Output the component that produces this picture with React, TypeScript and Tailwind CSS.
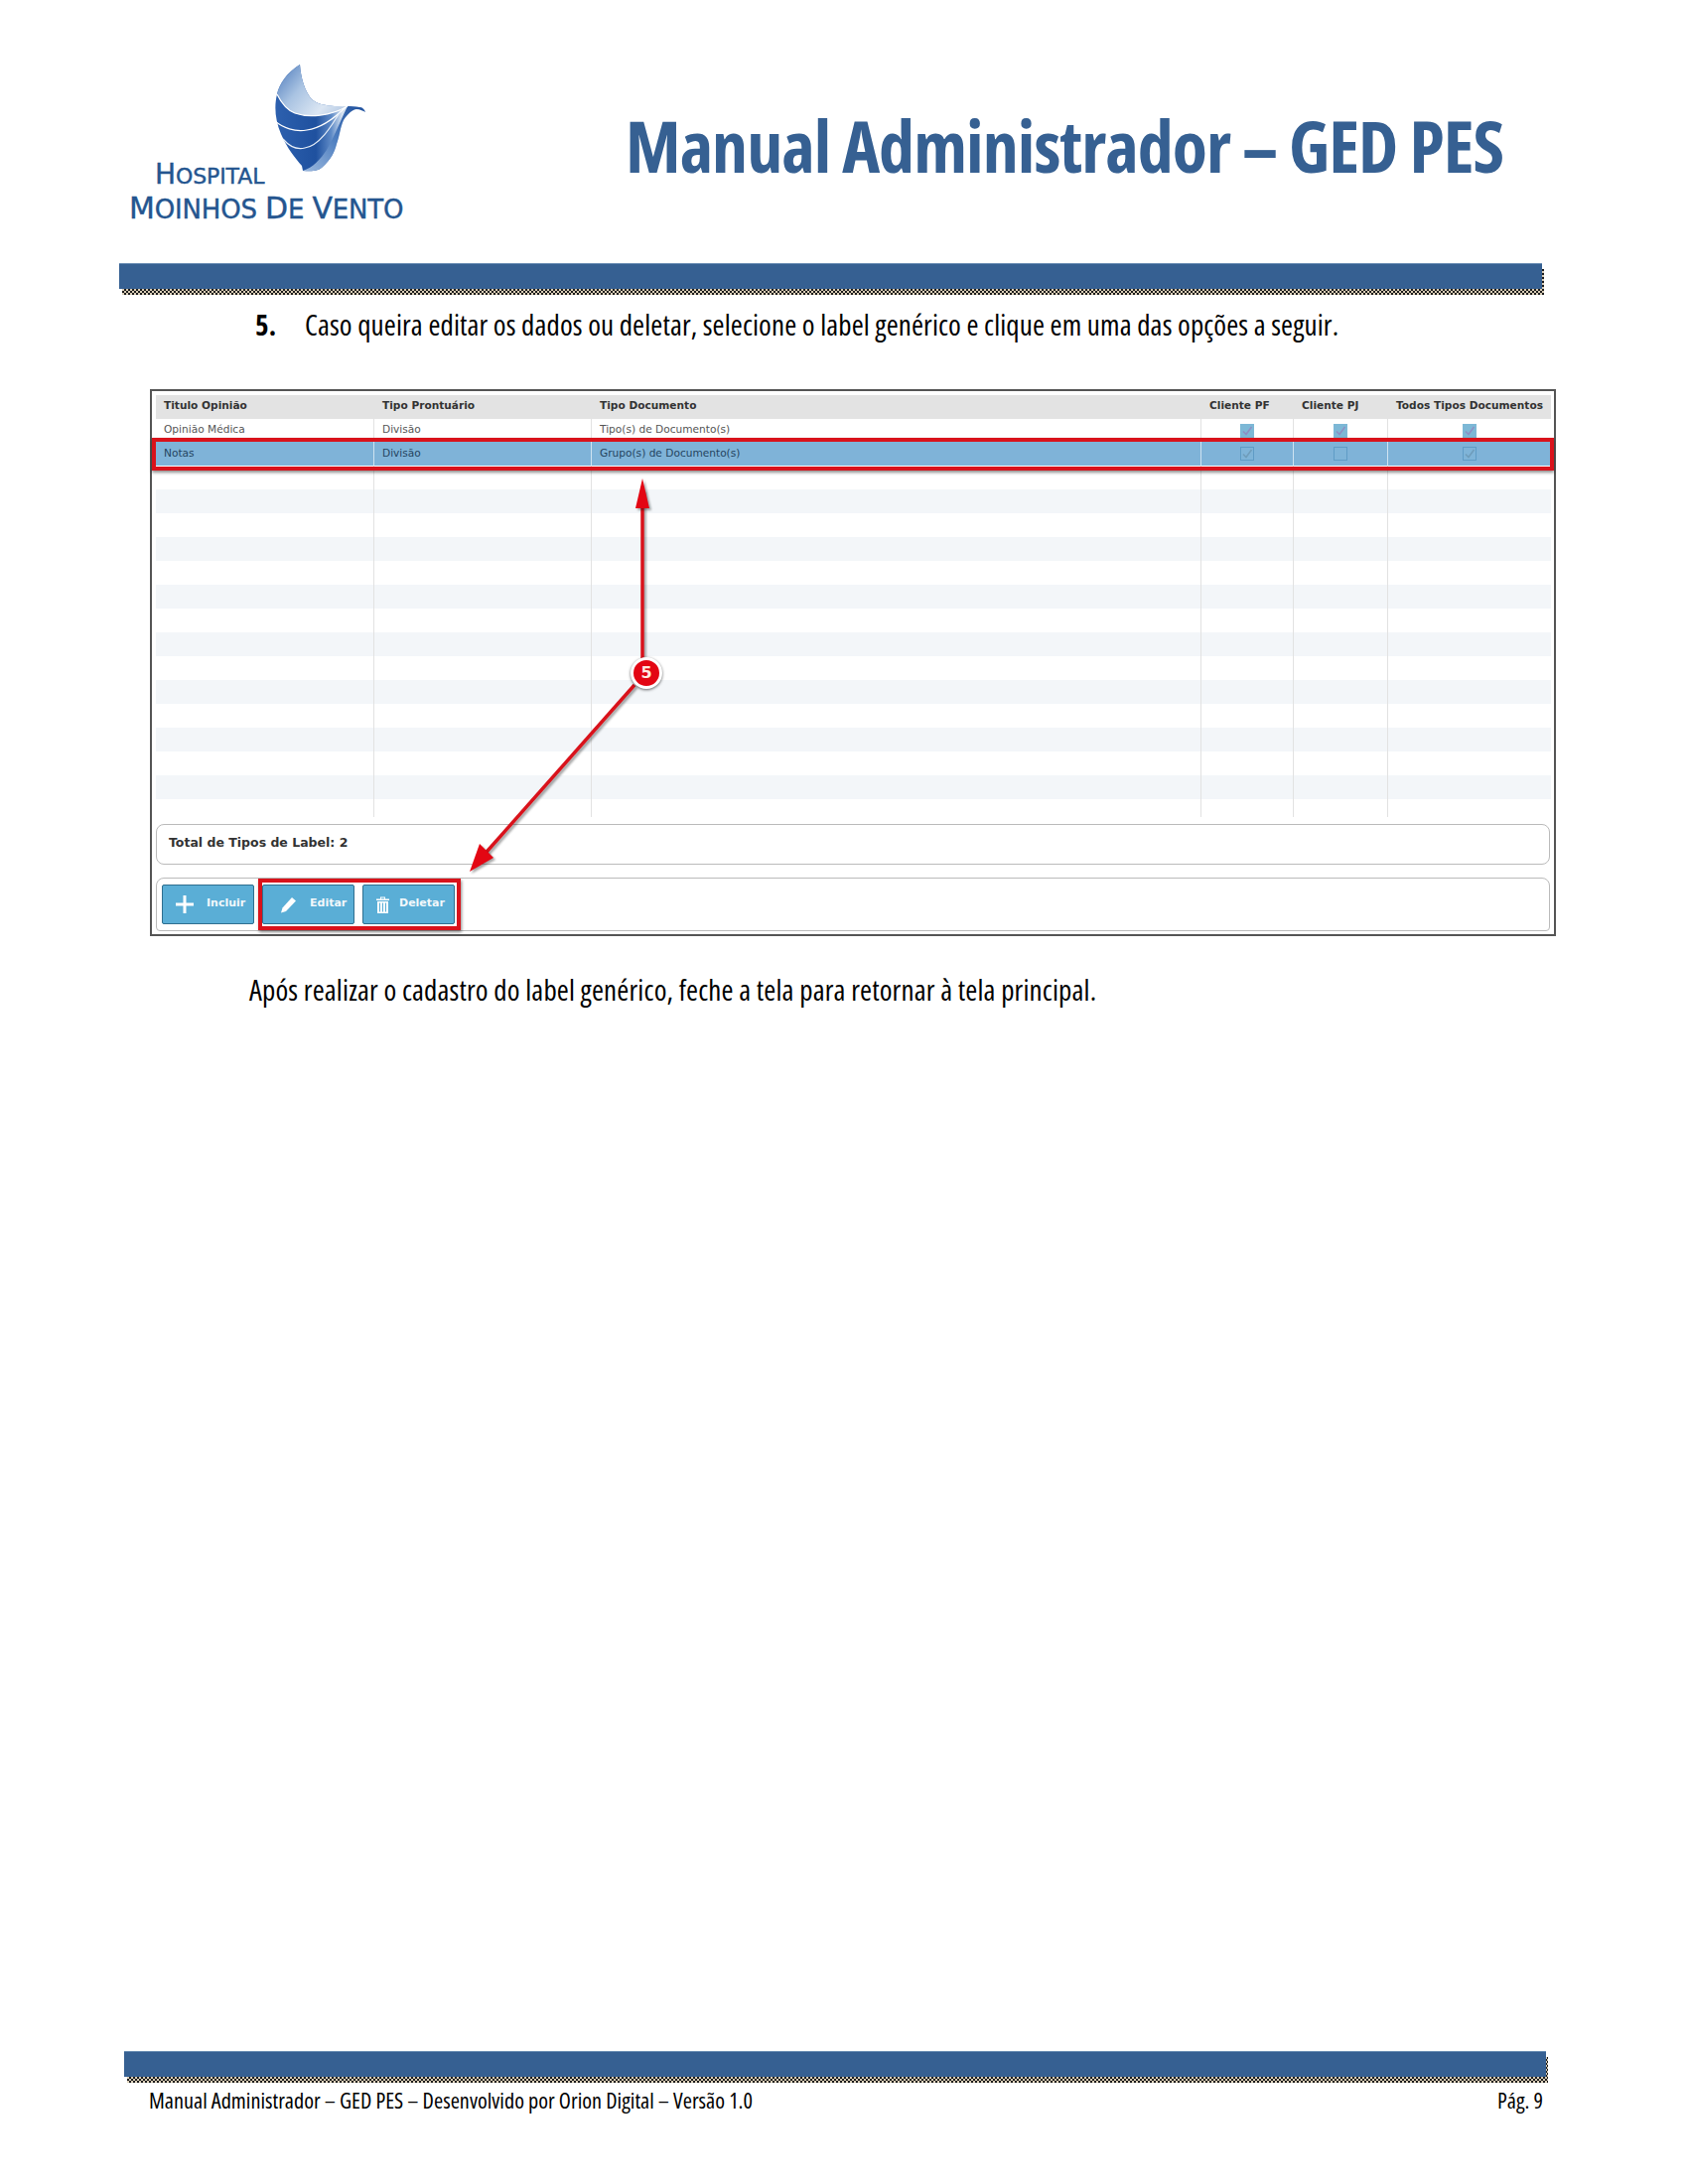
const condensed = { fontFamily: '"Open Sans", sans-serif', fontStretch: '75%' };

const columns = ['Titulo Opinião', 'Tipo Prontuário', 'Tipo Documento', 'Cliente PF', 'Cliente PJ', 'Todos Tipos Documentos'];
const rowGrid = 'grid grid-cols-[220px_219px_614px_93px_95px_163px]';
const stripes = [0, 1, 2, 3, 4, 5, 6, 7, 8, 9, 10, 11, 12, 13, 14];

const Bar = () => (
  <div className="relative h-[33px]">
    <div className="absolute left-[3px] top-[6px] h-[26px] w-[calc(100%-1px)] bg-[repeating-conic-gradient(#1d1d1d_0_25%,#d9cdb6_0_50%)] bg-[length:4px_4px]" />
    <div className="relative h-[26px] border-t border-[#6c8fb5] bg-[#366092]" />
  </div>
);

const Swoosh = () => (
  <svg width="92" height="108" viewBox="0 0 92 108" className="block">
    <defs>
      <linearGradient id="top" x1="0" y1="0.2" x2="1" y2="0.8">
        <stop offset="0" stopColor="#5c86c2" />
        <stop offset="0.35" stopColor="#a9c3e2" />
        <stop offset="0.75" stopColor="#dbe6f3" />
        <stop offset="1" stopColor="#b7cbe4" />
      </linearGradient>
      <linearGradient id="body" x1="0" y1="0" x2="1" y2="0">
        <stop offset="0" stopColor="#2d60ae" />
        <stop offset="0.45" stopColor="#1f519f" />
        <stop offset="0.62" stopColor="#5e8ac6" />
        <stop offset="0.74" stopColor="#d5e2f1" />
      </linearGradient>
      <linearGradient id="wing" x1="0" y1="1" x2="1" y2="0">
        <stop offset="0" stopColor="#9cb9de" />
        <stop offset="0.5" stopColor="#4f7fc0" />
        <stop offset="1" stopColor="#1f4f9c" />
      </linearGradient>
    </defs>
    <path d="M25 0C12 8 4 20 2 30C-1 42 0 56 6 70C12 84 20 94 27 102L28 107C38 108 44 107 48 103C56 96 60 88 62 80C65 72 66 62 69 56C73 50 78 45 82 45C86 45 89 47 91 48C90 45 88 43 85 43C76 41 68 43 60 42C50 41 42 40 36 34C30 26 26 14 25 0Z" fill="url(#body)" />
    <path d="M25 0C12 8 4 20 2 30C6 38 12 46 20 49C34 54 56 52 73 42C68 43 64 42 60 42C50 41 42 40 36 34C30 26 26 14 25 0Z" fill="url(#top)" />
    <path d="M73 42C66 56 60 72 52 86C46 95 38 104 28 107C38 108 44 107 48 103C56 96 60 88 62 80C65 72 66 62 69 56C73 50 78 45 82 45C86 45 89 47 91 48C90 45 88 43 85 43C80 42 77 42 73 42Z" fill="url(#wing)" />
    <path d="M2 30C6 38 12 46 20 49C34 54 56 52 73 42" fill="none" stroke="#ffffff" strokeWidth="1.2" />
    <path d="M0 57C8 64 20 68 32 66C46 64 60 54 71 43" fill="none" stroke="#ffffff" strokeWidth="1.2" />
    <path d="M8 75C14 82 22 86 30 84C44 82 56 64 67 45" fill="none" stroke="#e6eef8" strokeWidth="1.2" />
  </svg>
);

const Logo = () => (
  <div className="w-[300px] text-[#24558f] [-webkit-text-stroke:0.4px_#24558f]" style={{ fontFamily: '"DejaVu Sans", sans-serif' }}>
    <div className="ml-[147px]">
      <Swoosh />
    </div>
    <div className="-mt-[13px] ml-[26px] text-[22px] leading-[32px] tracking-[-0.1px] whitespace-nowrap uppercase">
      <span className="text-[28px]">H</span>ospital
    </div>
    <div className="text-[26px] leading-[32px] tracking-[-0.15px] whitespace-nowrap uppercase">
      <span className="text-[30px]">M</span>oinhos <span className="text-[30px]">d</span>e <span className="text-[30px]">V</span>ento
    </div>
  </div>
);

const CheckBox = ({ selected, checked }: { selected?: boolean; checked: boolean }) => (
  <div
    className={
      selected
        ? 'flex h-[14px] w-[14px] items-center justify-center border border-[#5f9cc6] bg-[#7fb4d8]'
        : 'flex h-[14px] w-[14px] items-center justify-center bg-[#7db8d6]'
    }
  >
    {checked && (
      <svg width="12" height="12" viewBox="0 0 12 12">
        <path d="M2 6.5L5 9.5L10.5 2" fill="none" stroke={selected ? '#6f9dbb' : '#8d8fc4'} strokeWidth="1.6" />
      </svg>
    )}
  </div>
);

const DataRow = ({ cells, flags, selected }: { cells: string[]; flags: boolean[]; selected?: boolean }) => {
  const line = selected ? 'border-r border-[#cfe3f1]' : 'border-r border-[#e2e2e2]';
  return (
    <div className={selected ? `${rowGrid} h-[24px] bg-[#7fb3d8] text-[#24445f]` : `${rowGrid} h-[23px] bg-white text-[#555555]`}>
      {cells.map((cell) => (
        <div key={cell} className={`flex items-center pb-[1px] pl-2 ${line}`}>
          {cell}
        </div>
      ))}
      {flags.map((flag, index) => (
        <div key={index} className={index < 2 ? `flex items-center justify-center ${line}` : 'flex items-center justify-center'}>
          <CheckBox selected={selected} checked={flag} />
        </div>
      ))}
    </div>
  );
};

const ActionButton = ({ icon, label, iconClass }: { icon: React.ReactNode; label: string; iconClass: string }) => (
  <button
    type="button"
    className="flex h-[40px] w-[93px] items-center rounded-[2px] border border-[#2f6f8f] bg-[#5aaed6] text-[11px] font-bold text-[#f2f8fb]"
  >
    <span className={iconClass}>{icon}</span>
    <span className="-mt-[2px]">{label}</span>
  </button>
);

const PlusIcon = (
  <svg width="18" height="18" viewBox="0 0 18 18" className="block" fill="#ffffff">
    <path d="M7.5 0h3v7.5H18v3h-7.5V18h-3v-7.5H0v-3h7.5z" />
  </svg>
);

const PencilIcon = (
  <svg width="17" height="17" viewBox="0 0 17 17" className="block" fill="#ffffff">
    <path d="M12 1l4 3.5L6 15l-5 1.500L2.500 11.500z" />
  </svg>
);

const TrashIcon = (
  <svg width="13" height="17" viewBox="0 0 13 17" className="block" fill="#ffffff">
    <path d="M0 2.500h13V4H0zM4 0.500h5V2.500H8V1.500H5V2.500H4zM1 5h11v12H1zM3 6.500v9h1v-9zM6 6.500v9h1v-9zM9 6.500v9h1v-9z" fillRule="evenodd" />
  </svg>
);

export default function App() {
  return (
    <div className="relative flex h-[2200px] w-[1700px] flex-col bg-white text-black">
      <header className="flex h-[265px] pl-[130px] pt-[65px]">
        <Logo />
        <h1
          className="ml-[200px] mt-[41px] text-[72px] leading-[80px] font-bold tracking-[-0.95px] whitespace-nowrap text-[#366092]"
          style={condensed}
        >
          Manual Administrador – GED PES
        </h1>
      </header>

      <div className="ml-[120px] w-[1433px]">
        <Bar />
      </div>

      <div className="mt-[6px] flex h-[46px] items-center pl-[257px] text-[29px] tracking-[0.12px] whitespace-nowrap" style={condensed}>
        <span className="w-[50px] font-bold">5.</span>
        <span>Caso queira editar os dados ou deletar, selecione o label genérico e clique em uma das opções a seguir.</span>
      </div>

      <section
        className="relative ml-[151px] mt-[42px] h-[551px] w-[1416px] border-2 border-[#555555] pl-1 pr-[3px] pt-1 text-[10.6px]"
        style={{ fontFamily: '"DejaVu Sans", sans-serif' }}
      >
        <div className={`${rowGrid} h-[24px] bg-[#e3e3e3] font-bold text-[#333333]`}>
          {columns.map((name) => (
            <div key={name} className="flex items-center pb-[2px] pl-2">
              {name}
            </div>
          ))}
        </div>
        <DataRow cells={['Opinião Médica', 'Divisão', 'Tipo(s) de Documento(s)']} flags={[true, true, true]} />
        <DataRow cells={['Notas', 'Divisão', 'Grupo(s) de Documento(s)']} flags={[true, false, true]} selected />
        <div className="h-[354px] overflow-hidden">
          {stripes.map((row) => (
            <div key={row} className={row % 2 === 1 ? `${rowGrid} h-[24px] bg-[#f3f6f9]` : `${rowGrid} h-[24px] bg-white`}>
              <div className="border-r border-[#e2e2e2]" />
              <div className="border-r border-[#e2e2e2]" />
              <div className="border-r border-[#e2e2e2]" />
              <div className="border-r border-[#e2e2e2]" />
              <div className="border-r border-[#e2e2e2]" />
              <div />
            </div>
          ))}
        </div>

        <div className="mt-[7px] flex h-[41px] w-[1404px] items-center rounded-lg border border-[#bbbbbb] pb-[2px] pl-3 text-[12.5px] font-bold text-[#333333]">
          Total de Tipos de Label: 2
        </div>
        <div className="mt-[13px] flex h-[54px] w-[1404px] items-start gap-2 rounded-t-lg rounded-b-sm border border-[#bbbbbb] pl-[5px] pt-[6px]">
          <ActionButton icon={PlusIcon} label="Incluir" iconClass="ml-[13px] mr-[13px]" />
          <ActionButton icon={PencilIcon} label="Editar" iconClass="ml-[17px] mr-[13px]" />
          <ActionButton icon={TrashIcon} label="Deletar" iconClass="ml-[13px] mr-[10px]" />
        </div>

        {/* callouts drawn over the screenshot */}
        <div className="absolute left-0 top-[47px] h-[33px] w-[1412px] border-[4px] border-[#d9121b] shadow-[0_2px_3px_rgba(0,0,0,0.45)]" />
        <div className="absolute left-[107px] top-[491px] h-[52px] w-[204px] border-[4px] border-[#d9121b] shadow-[1px_2px_3px_rgba(0,0,0,0.45)]" />
        <svg className="absolute left-[301px] top-[80px]" width="370" height="410" viewBox="0 0 370 410">
          <g fill="none" stroke="#d9121b" strokeWidth="3.5" style={{ filter: 'drop-shadow(2px 2px 1px rgba(0,0,0,0.35))' }}>
            <path d="M193 20V190" />
            <path d="M185 216L29 392" />
          </g>
          <g fill="#e30613" style={{ filter: 'drop-shadow(2px 2px 1px rgba(0,0,0,0.35))' }}>
            <path d="M193 8L186 38H200Z" />
            <path d="M19 404L29 376L43 390Z" />
          </g>
        </svg>
        <div className="absolute left-[482px] top-[268px] flex h-[32px] w-[32px] items-center justify-center rounded-full border-[3px] border-white bg-[#e30613] text-[16px] font-bold text-[#ffe9e0] shadow-[0_1px_3px_rgba(0,0,0,0.6)]">
          5
        </div>
      </section>

      <p className="ml-[251px] mt-[31px] text-[29px] leading-[46px] tracking-[0.16px] whitespace-nowrap" style={condensed}>
        Após realizar o cadastro do label genérico, feche a tela para retornar à tela principal.
      </p>

      <footer className="mt-auto ml-[125px] mb-[69px] w-[1432px]">
        <Bar />
        <div className="flex justify-between pl-[25px] pr-[3px] pt-[2px] text-[22.25px] leading-[30px]" style={condensed}>
          <span>Manual Administrador – GED PES – Desenvolvido por Orion Digital – Versão 1.0</span>
          <span>Pág. 9</span>
        </div>
      </footer>
    </div>
  );
}
